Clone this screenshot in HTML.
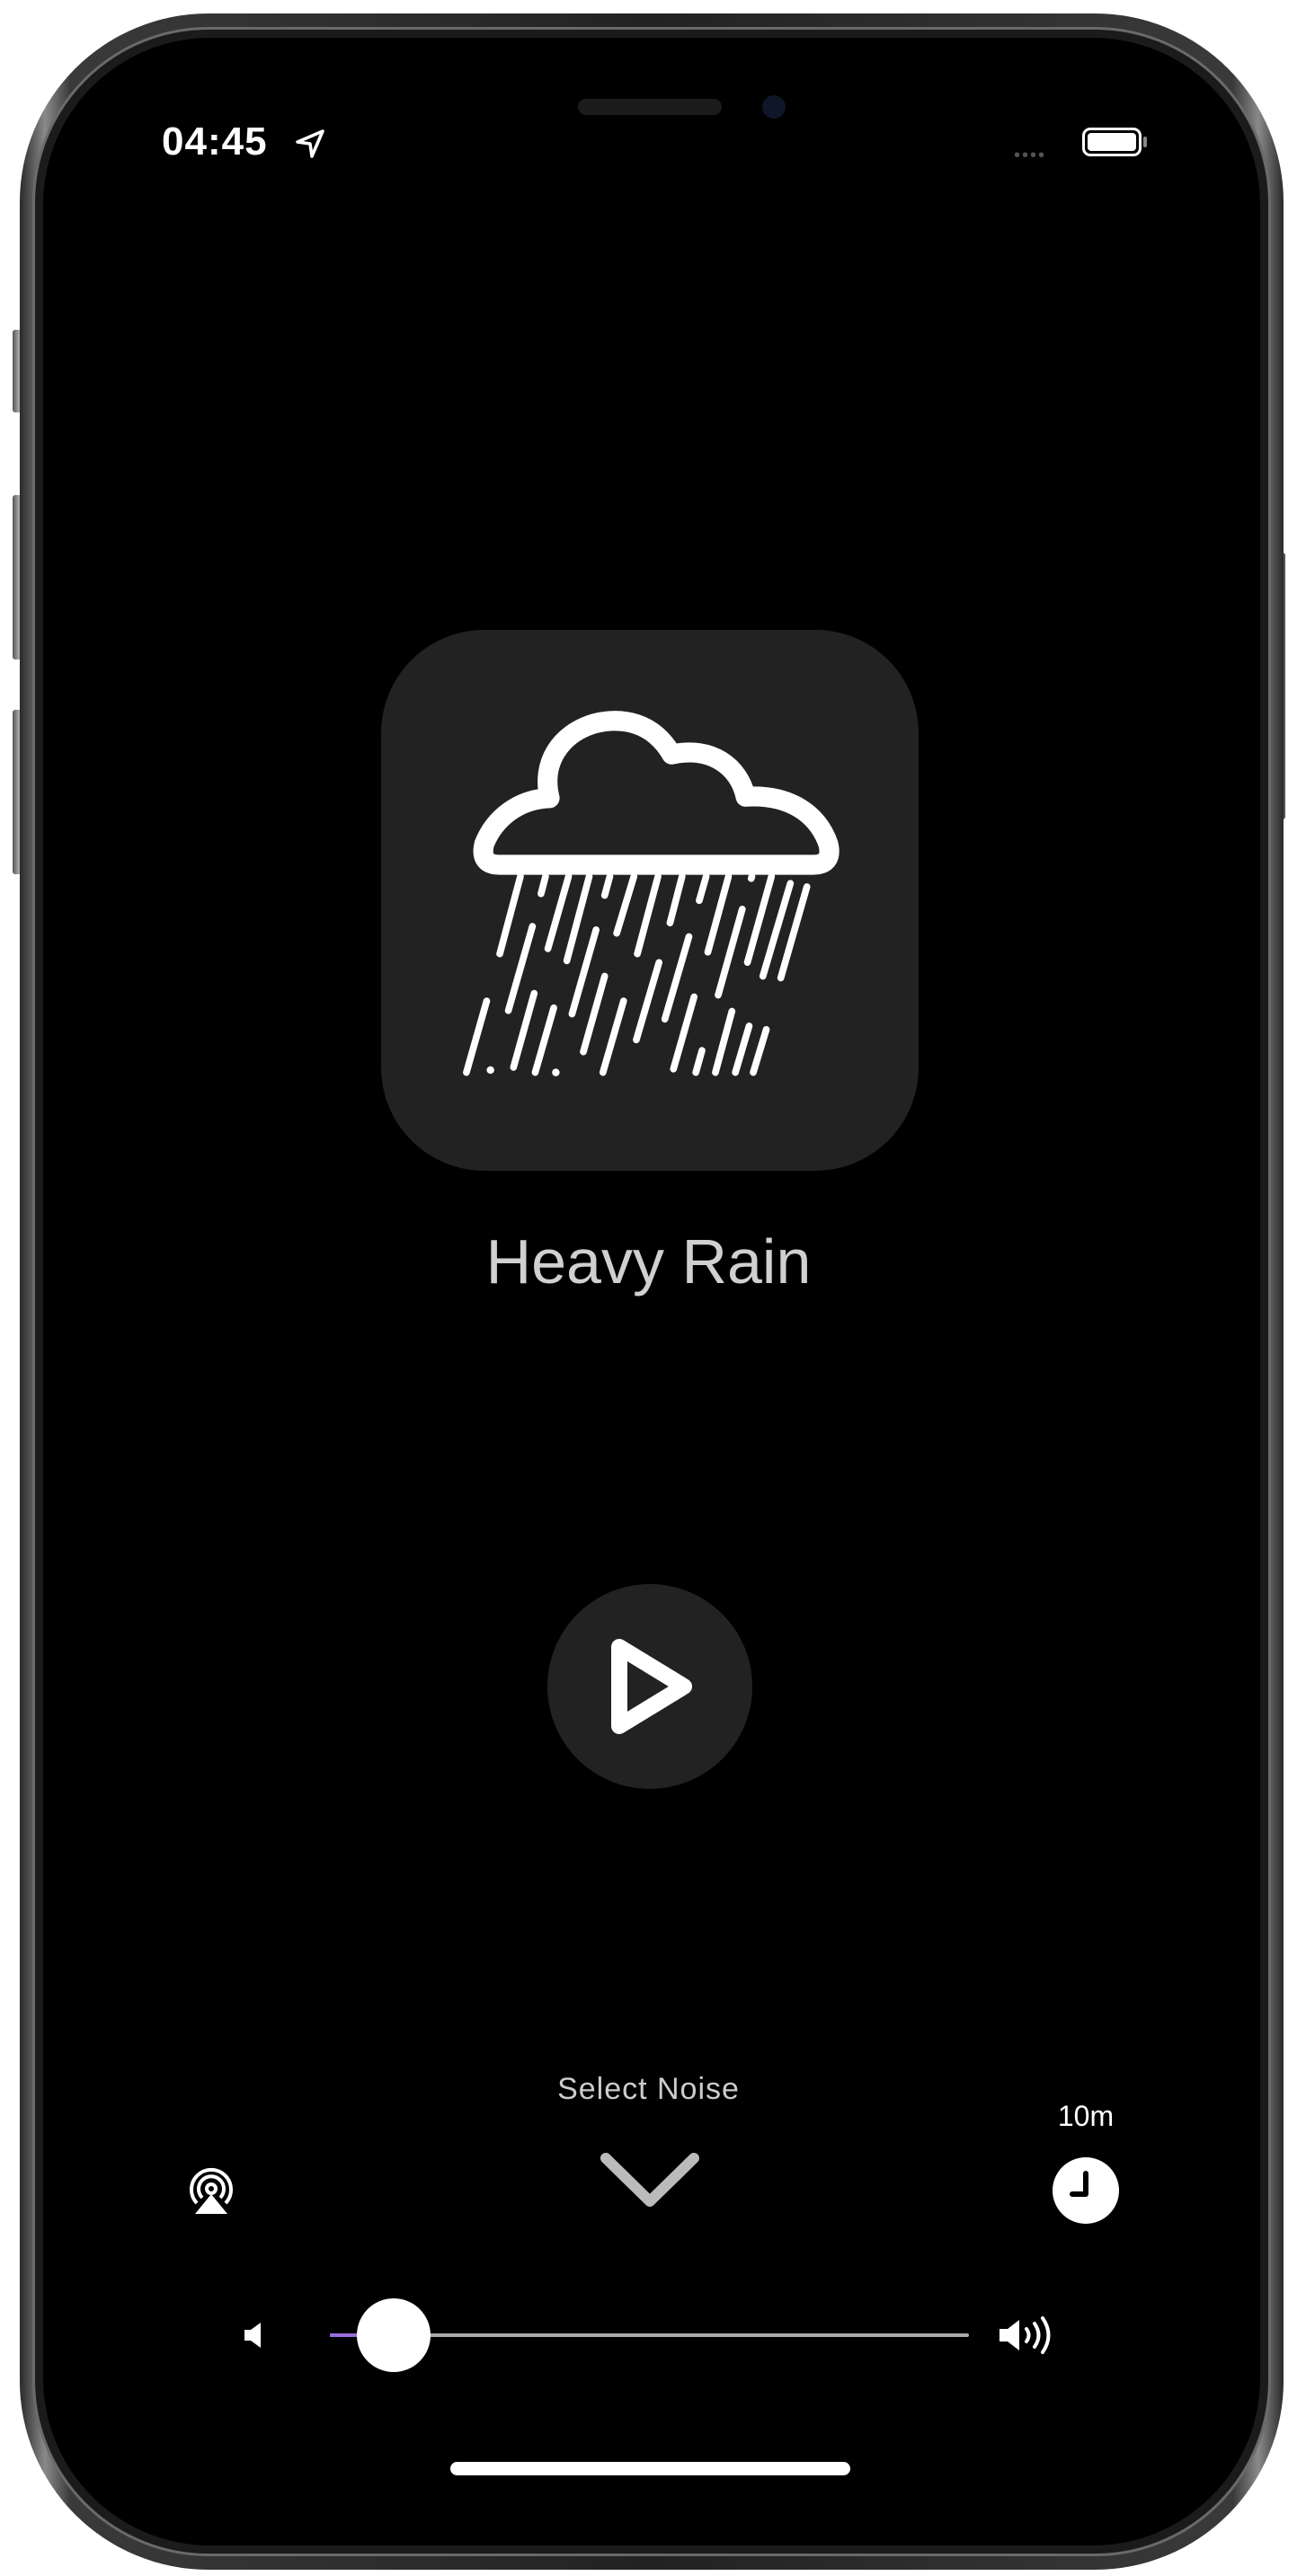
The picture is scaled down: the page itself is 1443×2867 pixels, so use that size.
<!DOCTYPE html>
<html><head><meta charset="utf-8"><style>
html,body{margin:0;padding:0;background:#fff;}
body{width:1443px;height:2867px;position:relative;overflow:hidden;font-family:"Liberation Sans",sans-serif;}
.abs{position:absolute;}
.btn{position:absolute;background:linear-gradient(90deg,#555,#aaa,#444);border-radius:3px;}
</style></head><body>
<div class="btn" style="left:14px;top:367px;width:14px;height:92px"></div>
<div class="btn" style="left:14px;top:551px;width:14px;height:183px"></div>
<div class="btn" style="left:14px;top:790px;width:14px;height:183px"></div>
<div class="btn" style="left:1416px;top:615px;width:14px;height:297px"></div>
<div class="abs" style="left:22px;top:15px;width:1406px;height:2845px;border-radius:210px;background:linear-gradient(90deg,#2a2a2a,#8a8a8a 2%,#3a3a3a 4%,#222 50%,#3a3a3a 96%,#8a8a8a 98%,#2a2a2a);"></div>
<div class="abs" style="left:36px;top:30px;width:1378px;height:2815px;border-radius:196px;background:#1b1b1b;border:3px solid #6a6a6a;box-sizing:border-box;"></div>
<div class="abs" style="left:48px;top:42px;width:1354px;height:2791px;border-radius:186px;background:#000;"></div>
<div class="abs" style="left:643px;top:110px;width:160px;height:18px;border-radius:9px;background:#1c1c1c"></div>
<div class="abs" style="left:848px;top:106px;width:26px;height:26px;border-radius:13px;background:#0f1628;"></div>
<div class="abs" style="left:180px;top:133px;color:#fff;font-size:44px;font-weight:bold;letter-spacing:1px">04:45</div>
<svg class="abs" style="left:327px;top:142px" width="36" height="36" viewBox="0 0 36 36"><path d="M32 4 L4 16 L18 18 L20 32 Z" fill="none" stroke="#fff" stroke-width="3.5" stroke-linejoin="round"/></svg>
<div class="abs" style="left:1128px;top:162px;color:#555;font-size:20px;letter-spacing:2px">••••</div>
<div class="abs" style="left:1204px;top:142px;width:66px;height:32px;border:3px solid #fff;border-radius:9px;box-sizing:border-box;padding:3px"><div style="background:#fff;width:100%;height:100%;border-radius:4px"></div></div>
<div class="abs" style="left:1272px;top:152px;width:4px;height:12px;background:#888;border-radius:2px"></div>
<div class="abs" style="left:424px;top:701px;width:598px;height:602px;border-radius:115px;background:#222;"></div>
<svg class="abs" style="left:424px;top:700px" width="600" height="600" viewBox="0 0 1568 1568">
<path d="M345 686 L1255 686 Q1315 686 1300 625 C1270 540 1190 480 1060 488 C1040 400 960 340 845 365 C790 270 700 255 620 275 C520 305 465 390 490 492 C400 495 330 550 300 625 Q285 686 345 686 Z" fill="none" stroke="#fff" stroke-width="58" stroke-linejoin="round"/>
<g stroke="#fff" stroke-width="20" stroke-linecap="round" fill="none">
<path d="M405 720L345 945M478 720L465 770M545 720L485 930M605 720L540 965M665 720L650 775M735 720L685 885M805 720L745 945M875 720L840 855M945 720L925 790M1010 720L950 940M1135 720L1065 970M1190 740L1110 1010M1238 750L1162 1015M440 865L370 1110M625 875L555 1120M895 895L825 1135M1050 815L980 1065M808 970L742 1195M650 1010L588 1230M445 1060L385 1275M307 1082L248 1290M705 1082L645 1290M910 1070L850 1280M502 1102L448 1290M1020 1112L972 1290M1070 1155L1030 1290M1120 1165L1082 1290M933 1226L915 1290M1078 720L1076 726"/>
</g>
<circle cx="318" cy="1283" r="11" fill="#fff"/><circle cx="508" cy="1290" r="11" fill="#fff"/>
</svg>
<div class="abs" style="left:0;width:1443px;top:1364px;text-align:center;color:#d0d0d0;font-size:70px">Heavy Rain</div>
<div class="abs" style="left:609px;top:1763px;width:228px;height:228px;border-radius:50%;background:#222"></div>
<svg class="abs" style="left:609px;top:1763px" width="228" height="228" viewBox="0 0 228 228"><path d="M80 70 L80 158 L152 114 Z" fill="none" stroke="#fff" stroke-width="18" stroke-linejoin="round"/></svg>
<div class="abs" style="left:0;width:1443px;top:2306px;text-align:center;color:#ccc;font-size:34px;letter-spacing:1px">Select Noise</div>
<svg class="abs" style="left:666px;top:2392px" width="114" height="70" viewBox="0 0 114 70"><path d="M8 10 L57 58 L106 10" fill="none" stroke="#bbb" stroke-width="12" stroke-linecap="round" stroke-linejoin="round"/></svg>
<svg class="abs" style="left:205px;top:2408px" width="60" height="60" viewBox="0 0 60 60"><g fill="none" stroke="#fff" stroke-width="4"><path d="M14 44 A22 22 0 1 1 46 44"/><path d="M20 38 A14 14 0 1 1 40 38"/><circle cx="30" cy="28" r="5"/></g><path d="M30 34 L48 56 L12 56 Z" fill="#fff"/></svg>
<div class="abs" style="left:1166px;top:2337px;width:84px;text-align:center;color:#fff;font-size:32px">10m</div>
<div class="abs" style="left:1171px;top:2401px;width:74px;height:74px;border-radius:50%;background:#fff"></div>
<svg class="abs" style="left:1171px;top:2401px" width="74" height="74" viewBox="0 0 74 74"><path d="M37 18 L37 41 L22 41" fill="none" stroke="#000" stroke-width="6" stroke-linecap="round" stroke-linejoin="round"/></svg>
<svg class="abs" style="left:268px;top:2582px" width="30" height="34" viewBox="0 0 30 34"><path d="M4 11 L11 11 L22 3 L22 31 L11 23 L4 23 Z" fill="#fff"/></svg>
<div class="abs" style="left:367px;top:2597px;width:711px;height:4px;background:#aaa;border-radius:2px"></div>
<div class="abs" style="left:367px;top:2597px;width:72px;height:4px;background:#9b6bdc;"></div>
<div class="abs" style="left:397px;top:2558px;width:82px;height:82px;border-radius:50%;background:#fff"></div>
<svg class="abs" style="left:1110px;top:2577px" width="68" height="44" viewBox="0 0 68 44"><path d="M2 15 L11 15 L24 5 L24 39 L11 29 L2 29 Z" fill="#fff"/><g fill="none" stroke="#fff" stroke-width="4" stroke-linecap="round"><path d="M32 15 Q37 22 32 29"/><path d="M41 9 Q50 22 41 35"/><path d="M50 3 Q63 22 50 41"/></g></svg>
<div class="abs" style="left:501px;top:2740px;width:445px;height:15px;border-radius:8px;background:#fff"></div>
</body></html>
